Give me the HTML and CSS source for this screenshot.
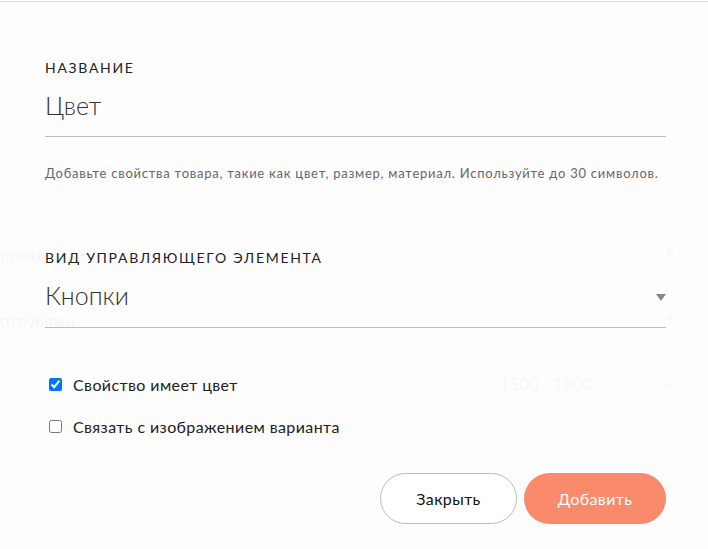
FILE: index.html
```html
<!DOCTYPE html>
<html lang="ru">
<head>
<meta charset="utf-8">
<title>Свойство</title>
<link rel="stylesheet" href="styles.css">
</head>
<body>
<div class="ghost">
  <span class="g g1">лочке</span>
  <span class="g g2">отрубями</span>
  <span class="g g3">1500 - 1800</span>
  <span class="g g4">∞</span>
  <span class="g g5">∞</span>
  <span class="g g6">∞</span>
</div>
<div class="modal">
  <div class="field">
    <div class="label">Название</div>
    <div class="input">Цвет</div>
  </div>
  <p class="hint">Добавьте свойства товара, такие как цвет, размер, материал. Используйте до 30 символов.</p>
  <div class="field field-select">
    <div class="label">Вид управляющего элемента</div>
    <div class="input select">
      <span>Кнопки</span>
      <span class="caret"></span>
    </div>
  </div>
  <div class="checks">
    <label class="check"><input type="checkbox" checked><span>Свойство имеет цвет</span></label>
    <label class="check"><input type="checkbox"><span>Связать с изображением варианта</span></label>
  </div>
  <div class="actions">
    <button class="btn btn-ghost" type="button">Закрыть</button>
    <button class="btn btn-primary" type="button">Добавить</button>
  </div>
</div>
</body>
</html>
```
FILE: styles.css
```css
html, body {
  margin: 0;
  padding: 0;
  background: #fdfdfd;
}
body {
  font-family: Lato, "Noto Sans", sans-serif;
  color: #222;
  position: relative;
  width: 708px;
  height: 549px;
  overflow: hidden;
}
.ghost {
  position: absolute;
  inset: 0;
  z-index: 0;
  font-family: "Open Sans", sans-serif;
  color: #f6f6f6;
  font-size: 16px;
}
.g { position: absolute; }
.g1 { left: 0; top: 245px; }
.g2 { left: 0; top: 310px; }
.g3 { left: 500px; top: 372px; font-size: 17px; }
.g4 { left: 666px; top: 242px; font-size: 12px; }
.g5 { left: 666px; top: 309px; font-size: 12px; }
.g6 { left: 666px; top: 376px; font-size: 12px; }
.modal {
  position: relative;
  z-index: 1;
  margin-top: 1px;
  border-top: 1px solid #dcdcdc;
  padding: 56px 42px 0 45px;
  width: 621px;
}
.label {
  font-size: 14px;
  line-height: 20px;
  letter-spacing: 1.7px;
  text-transform: uppercase;
  color: #222;
}
.input {
  margin-top: 12px;
  font-size: 25px;
  font-weight: 300;
  line-height: 30px;
  color: #333;
  padding-bottom: 16px;
  border-bottom: 1px solid #bdbdbd;
}
.hint {
  margin: 27px 0 0;
  font-size: 13px;
  line-height: 18px;
  letter-spacing: 0.75px;
  color: #666;
  white-space: nowrap;
}
.field-select { margin-top: 66px; }
.select {
  display: flex;
  align-items: center;
  justify-content: space-between;
  padding-bottom: 17px;
}
.caret {
  width: 0;
  height: 0;
  border-left: 5px solid transparent;
  border-right: 5px solid transparent;
  border-top: 7px solid #888;
  margin-top: 4px;
}
.checks {
  margin-top: 46px;
  display: flex;
  flex-direction: column;
  gap: 21px;
}
.check {
  display: flex;
  align-items: center;
  font-size: 16px;
  line-height: 21px;
  letter-spacing: 0.4px;
  color: #222;
}
.check input {
  margin: 0 11px 0 4px;
  width: 13px;
  height: 13px;
}
.actions {
  margin-top: 36px;
  display: flex;
  justify-content: flex-end;
  gap: 7px;
}
.btn {
  height: 51px;
  border-radius: 26px;
  font-family: Lato, "Noto Sans", sans-serif;
  font-size: 16px;
  letter-spacing: 0.4px;
  cursor: pointer;
}
.btn-ghost {
  width: 137px;
  background: #fff;
  border: 1px solid #bbb;
  color: #111;
}
.btn-primary {
  width: 142px;
  background: #f98a6c;
  border: none;
  color: #fff;
}
```
